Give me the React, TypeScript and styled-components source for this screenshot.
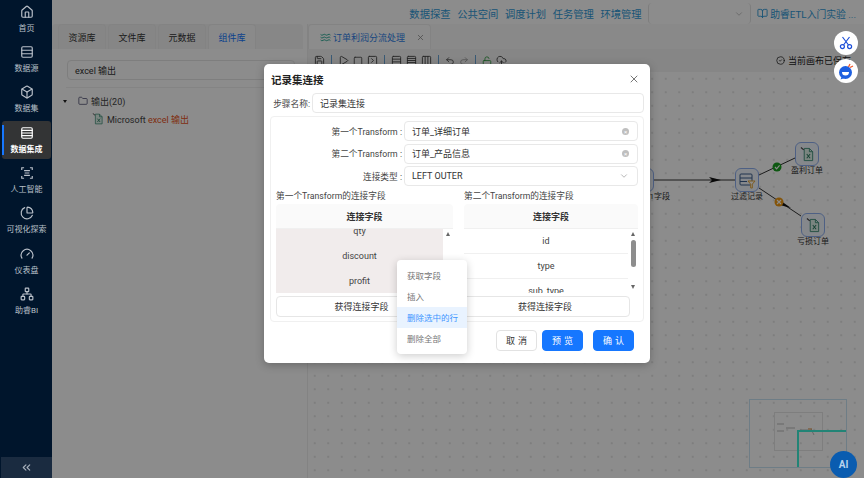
import styled, { createGlobalStyle } from "styled-components";
import {
  BookOpen,
  Box,
  ChartPie,
  ChevronDown,
  ChevronsLeft,
  CircleCheck,
  CloudUpload,
  Columns3,
  Folder,
  Gauge,
  House,
  LockOpen,
  Network,
  Play,
  Redo2,
  Rows3,
  Rows4,
  Save,
  Square,
  SquareChevronRight,
  Undo2,
  Waves,
  X,
} from "lucide-react";

const GlobalStyle = createGlobalStyle`
  html, body {
    margin: 0;
    padding: 0;
    width: 864px;
    height: 478px;
    overflow: hidden;
    background: #fff;
    font-family: Roboto, "Noto Sans CJK SC", sans-serif;
  }
  * { box-sizing: border-box; }
`;

const Page = styled.div`
  display: flex;
  width: 864px;
  height: 478px;
  position: relative;
  overflow: hidden;
`;

const Sidebar = styled.aside`
  width: 52px;
  flex: none;
  display: flex;
  flex-direction: column;
  background: #00152c;
  padding-left: 1px;
`;

const NavList = styled.nav`
  flex: 1;
  display: flex;
  flex-direction: column;
  gap: 2.4px;
  padding: 0 1px;
`;

const NavItem = styled.div<{ $active?: boolean }>`
  height: 38px;
  display: flex;
  flex-direction: column;
  align-items: center;
  justify-content: center;
  gap: 4px;
  border-radius: 3px;
  position: relative;
  font-size: 8px;
  line-height: 11px;
  white-space: nowrap;
  color: ${(p) => (p.$active ? "#ffffff" : "#b9c0c9")};
  background: ${(p) => (p.$active ? "#333435" : "transparent")};
  font-weight: ${(p) => (p.$active ? 600 : 400)};

  &::before {
    content: "";
    display: ${(p) => (p.$active ? "block" : "none")};
    position: absolute;
    left: 0;
    top: 4px;
    bottom: 4px;
    width: 2px;
    background: #1677ff;
  }
`;

const Collapse = styled.div`
  height: 21px;
  display: flex;
  align-items: center;
  justify-content: center;
  background: #1a2b40;
  color: #a9b2bd;
`;

const Main = styled.main`
  flex: 1;
  min-width: 0;
  position: relative;
  display: flex;
  flex-direction: column;
  background: #fff;
`;

const Header = styled.header`
  height: 24px;
  flex: none;
  display: flex;
  align-items: center;
  justify-content: flex-end;
  padding: 3px 8px 0 0;
  color: #2f9ad8;
  font-size: 10.3px;
`;

const HeaderLink = styled.span`
  margin-right: 6.6px;
  white-space: nowrap;
`;

const HeaderSelect = styled.div`
  width: 103px;
  height: 21px;
  margin: 0 6px 0 0;
  display: flex;
  align-items: center;
  justify-content: flex-end;
  padding-right: 6px;
  border-left: 1px solid #e4e4e4;
  border-right: 1px solid #e4e4e4;
  border-radius: 4px;
  color: #bbb;
`;

const Guide = styled.span`
  display: flex;
  align-items: center;
  gap: 2px;
  white-space: nowrap;
  font-size: 9.8px;
`;

const Body = styled.div`
  flex: 1;
  min-height: 0;
  display: flex;
`;

const LeftPanel = styled.section`
  width: 256px;
  flex: none;
  display: flex;
  flex-direction: column;
  border-right: 1px solid #eee;
`;

const TabBar = styled.div`
  height: 25px;
  flex: none;
  display: flex;
  gap: 2px;
  padding-left: 6px;
  margin-right: 4px;
  background: #f6f6f6;
  border-radius: 4px 4px 0 0;
`;

const Tab = styled.div<{ $active?: boolean }>`
  width: 48px;
  display: flex;
  align-items: center;
  justify-content: center;
  font-size: 9px;
  border: 1px solid #efefef;
  border-bottom: none;
  border-radius: 4px 4px 0 0;
  color: ${(p) => (p.$active ? "#1677ff" : "#333")};
  background: ${(p) => (p.$active ? "#fbfbfb" : "#f5f5f5")};
`;

const SearchRow = styled.div`
  display: flex;
  margin: 11px 0 0 15px;
  height: 20px;
  width: 228px;
  padding-left: 7px;
  align-items: center;
  font-size: 9px;
  color: #333;
  border: 1px solid #e6e6e6;
  border-radius: 4px;
`;

const Rule = styled.div`
  height: 1px;
  margin: 7px 2px 0 14px;
  background: #f0f0f0;
`;

const Tree = styled.div`
  padding: 4px 0 0 11px;
  font-size: 9px;
  color: #444;
`;

const TreeRow = styled.div<{ $indent: number }>`
  height: 18px;
  display: flex;
  align-items: center;
  gap: 3px;
  padding-left: ${(p) => p.$indent}px;
  white-space: nowrap;
`;

const Caret = styled.span`
  width: 0;
  height: 0;
  margin-right: 8px;
  border-left: 2.5px solid transparent;
  border-right: 2.5px solid transparent;
  border-top: 3.5px solid #222;
`;

const Highlight = styled.span`
  color: #e9541c;
`;

const Editor = styled.section`
  flex: 1;
  min-width: 0;
  display: flex;
  flex-direction: column;
`;

const EditorTabs = styled.div`
  height: 25px;
  flex: none;
  display: flex;
  background: #fafafa;
`;

const EditorTab = styled.div`
  width: 123px;
  display: flex;
  align-items: center;
  gap: 2px;
  padding-left: 11px;
  background: #fff;
  border: 1px solid #efefef;
  border-bottom: none;
  border-radius: 4px 4px 0 0;
  color: #2f7fe8;
  font-size: 9px;
  white-space: nowrap;
`;

const TabClose = styled.span`
  display: flex;
  margin-left: 9px;
  color: #888;
`;

const ToolBar = styled.div`
  height: 23px;
  flex: none;
  display: flex;
  align-items: center;
  gap: 4px;
  padding: 0 13px 0 6px;
  background: #f5f5f5;
  color: #444;
`;

const ToolSep = styled.span`
  width: 1px;
  height: 11px;
  margin: 0 2px;
  background: #6aa5d6;
`;

const SavedNote = styled.span`
  margin-left: auto;
  display: flex;
  align-items: center;
  gap: 3px;
  white-space: nowrap;
  font-size: 9px;
  color: #222;
`;

const Canvas = styled.div`
  flex: 1;
  position: relative;
  background-color: #fff;
  background-image: radial-gradient(#d4d4d4 0.6px, transparent 0.8px);
  background-size: 13.5px 13.5px;
`;

const Edges = styled.svg`
  position: absolute;
  left: 0;
  top: 0;
`;

const FlowNode = styled.div<{ $x: number; $y: number }>`
  position: absolute;
  left: ${(p) => p.$x}px;
  top: ${(p) => p.$y}px;
  width: 24px;
  height: 24px;
  display: flex;
  align-items: center;
  justify-content: center;
  border: 1px solid #8fb0f0;
  border-radius: 6px;
  background: #f3f7ff;
`;

const FlowLabel = styled.span`
  position: absolute;
  top: 22px;
  left: 50%;
  transform: translateX(-50%);
  font-size: 8px;
  line-height: 11px;
  color: #333;
  white-space: nowrap;
`;

const Mini = styled.div`
  position: absolute;
  left: 441px;
  top: 327px;
  width: 98px;
  height: 69px;
  border: 1px solid #c8e4f5;
`;

const MiniView = styled.div`
  position: absolute;
  left: 24px;
  top: 12px;
  width: 49px;
  height: 39px;
  border: 1px solid #e6e6e6;
`;

const MiniCross = styled.div`
  position: absolute;
  right: 0;
  bottom: 0;
  width: 49px;
  height: 37px;
  border-top: 2px solid #3ff0d8;
  border-left: 2px solid #3ff0d8;
`;

const Overlay = styled.div`
  position: absolute;
  inset: 0;
  display: flex;
  justify-content: center;
  align-items: flex-start;
  padding-top: 64px;
  background: rgba(0, 0, 0, 0.45);
`;

const Modal = styled.div`
  width: 386px;
  height: 299px;
  margin-right: 2px;
  padding: 5px 6px 0;
  background: #fff;
  border-radius: 5px;
  box-shadow: 0 2px 8px rgba(0, 0, 0, 0.25);
  display: flex;
  flex-direction: column;
  position: relative;
  color: #333;
  font-size: 9px;
`;

const ModalHead = styled.div`
  height: 20px;
  display: flex;
  align-items: center;
  justify-content: space-between;
  padding: 0 4px 0 1px;
  margin-bottom: 4px;
`;

const ModalTitle = styled.h2`
  margin: 0;
  font-size: 10.5px;
  font-weight: 700;
  color: #222;
`;

const CloseBtn = styled.span`
  display: flex;
  color: #777;
`;

const FormRow = styled.div<{ $labelWidth: number }>`
  display: grid;
  grid-template-columns: ${(p) => p.$labelWidth}px 1fr;
  align-items: center;
  column-gap: 2px;
  color: #444;
`;

const FormLabel = styled.label`
  text-align: right;
  white-space: nowrap;
  font-size: 8.7px;
`;

const Field = styled.div`
  height: 20px;
  display: flex;
  align-items: center;
  justify-content: space-between;
  padding: 0 8px 0 7px;
  border: 1px solid #e8e8e8;
  border-radius: 4px;
  background: #fff;
  color: #333;
  white-space: nowrap;
`;

const ClearDot = styled.span`
  width: 7px;
  height: 7px;
  border-radius: 50%;
  background: #bfbfbf;
  display: flex;
  align-items: center;
  justify-content: center;
  color: #fff;
  font-size: 6px;
  line-height: 7px;
`;

const FieldSet = styled.div`
  margin-top: 3px;
  height: 206px;
  padding: 4px 5px 0 5px;
  border: 1px solid #f0f0f0;
  border-radius: 4px;
  display: flex;
  flex-direction: column;
  gap: 2.7px;
`;

const Columns = styled.div`
  display: grid;
  grid-template-columns: 177px 174px;
  column-gap: 11px;
`;

const ColumnTitle = styled.div`
  height: 15px;
  line-height: 15px;
  font-size: 8.7px;
  color: #444;
  white-space: nowrap;
`;

const Table = styled.div`
  height: 89px;
  display: flex;
  flex-direction: column;
  overflow: hidden;
`;

const TableHead = styled.div`
  height: 25px;
  flex: none;
  display: flex;
  align-items: center;
  justify-content: center;
  font-weight: 700;
  color: #333;
  background: #fafafa;
  border-radius: 4px 4px 0 0;
  border-bottom: 1px solid #f0f0f0;
`;

const TableBody = styled.div`
  flex: 1;
  min-height: 0;
  display: flex;
  overflow: hidden;
`;

const Rows = styled.div<{ $shift: number }>`
  flex: 1;
  display: flex;
  flex-direction: column;
  margin-top: ${(p) => p.$shift}px;
`;

const Cell = styled.div<{ $selected?: boolean }>`
  height: 25px;
  flex: none;
  display: flex;
  align-items: center;
  justify-content: center;
  color: #444;
  font-size: 9px;
  background: ${(p) => (p.$selected ? "#f1ecec" : "#fff")};
  border-bottom: ${(p) => (p.$selected ? "none" : "1px solid #f0f0f0")};
`;

const ScrollTrack = styled.div`
  width: 10px;
  flex: none;
  position: relative;
  background: #fff;
`;

const ScrollArrow = styled.span<{ $down?: boolean }>`
  position: absolute;
  left: 2.5px;
  ${(p) => (p.$down ? "bottom: 4px;" : "top: 3px;")}
  border-left: 2.5px solid transparent;
  border-right: 2.5px solid transparent;
  ${(p) => (p.$down ? "border-top: 4px solid #666;" : "border-bottom: 4px solid #666;")}
`;

const ScrollThumb = styled.span`
  position: absolute;
  left: 3px;
  top: 11px;
  width: 5px;
  height: 27px;
  border-radius: 3px;
  background: #8d8d8d;
`;

const Actions = styled.div`
  display: grid;
  grid-template-columns: 171px 170px;
  column-gap: 13px;
`;

const FetchButton = styled.button`
  height: 21px;
  border: 1px solid #e6e6e6;
  border-radius: 4px;
  background: #fff;
  color: #333;
  font: inherit;
  padding: 0;
`;

const Footer = styled.div`
  display: flex;
  justify-content: flex-end;
  gap: 5px;
  padding: 8px 10px 0 0;
`;

const FootButton = styled.button<{ $primary?: boolean; $gap?: number }>`
  width: 41px;
  height: 21px;
  padding: 0;
  margin-left: ${(p) => p.$gap ?? 0}px;
  border: 1px solid ${(p) => (p.$primary ? "#1677ff" : "#e2e2e2")};
  border-radius: 4px;
  background: ${(p) => (p.$primary ? "#1677ff" : "#fff")};
  color: ${(p) => (p.$primary ? "#fff" : "#333")};
  font: inherit;
  letter-spacing: 3px;
  text-indent: 3px;
`;

const Menu = styled.div`
  position: absolute;
  left: 133px;
  top: 196px;
  width: 70px;
  height: 94px;
  padding: 5px 0;
  background: #fff;
  border-radius: 4px;
  box-shadow: 0 2px 8px rgba(0, 0, 0, 0.2);
  font-size: 8.5px;
`;

const MenuItem = styled.div<{ $active?: boolean }>`
  height: 21px;
  display: flex;
  align-items: center;
  padding: 0 0 2px 10px;
  color: ${(p) => (p.$active ? "#4096ff" : "#777")};
  background: ${(p) => (p.$active ? "#e9f3ff" : "transparent")};
`;

const FloatButton = styled.div<{ $top: number }>`
  position: absolute;
  left: 834px;
  top: ${(p) => p.$top}px;
  width: 24px;
  height: 24px;
  display: flex;
  align-items: center;
  justify-content: center;
  border-radius: 50%;
  background: #fff;
  color: #1d4fd8;
`;

const AiButton = styled.div`
  position: absolute;
  left: 830px;
  top: 451px;
  width: 27px;
  height: 27px;
  display: flex;
  align-items: center;
  justify-content: center;
  border-radius: 50%;
  background: #0a5cb0;
  color: #b9d3ee;
  font-size: 10px;
  font-weight: 700;
`;

function ScanIcon({ size = 14 }: { size?: number }) {
  return (
    <svg width={size} height={size} viewBox="0 0 24 24" fill="none" stroke="currentColor" strokeWidth="2">
      <path d="M3 7V3h4M17 3h4v4M21 17v4h-4M7 21H3v-4" />
      <path d="M7 8h10M8 12h8M7 16h10" />
    </svg>
  );
}

function SheetIcon({ size = 15 }: { size?: number }) {
  return (
    <svg width={size} height={size} viewBox="0 0 15 16" fill="none">
      <path d="M4 1.5h5.5L13 5v9.5H4z" fill="#dff2ea" stroke="#3f8f77" />
      <path d="M9.5 1.5V5H13" stroke="#3f8f77" />
      <path d="M6.7 7.5l3.6 4.5M10.3 7.5l-3.6 4.5" stroke="#2f7d63" strokeWidth="1.1" />
      <path d="M0.5 0.5l3 2.5" stroke="#444" strokeWidth="1.2" />
    </svg>
  );
}

function FilterIcon() {
  return (
    <svg width="17" height="17" viewBox="0 0 17 17" fill="none">
      <rect x="1" y="2" width="12" height="11" rx="1" stroke="#3b5e8c" />
      <path d="M1 6h12M1 9.5h7" stroke="#3b5e8c" />
      <path d="M9 9h7l-2.7 3.2V16h-1.6v-3.8z" fill="#fff" stroke="#e8a93a" />
    </svg>
  );
}

function CutIcon() {
  return (
    <svg width="14" height="14" viewBox="0 0 14 14" fill="none" stroke="#1d4fd8" strokeWidth="1.2">
      <circle cx="3.4" cy="10.6" r="2" />
      <circle cx="10.6" cy="10.6" r="2" />
      <path d="M4.5 9L10.5 1M9.5 9L3.5 1" />
    </svg>
  );
}

function BotIcon() {
  return (
    <svg width="18" height="18" viewBox="0 0 18 18">
      <circle cx="8.5" cy="10.5" r="6.5" fill="#1d5fe0" />
      <path d="M4.5 15l-1 2.5 4-1.5z" fill="#1d5fe0" />
      <path d="M5 10a3.5 3.5 0 0 0 7 0z" fill="#fff" />
      <path d="M13 2l-1.5 3M16 4l-3 1.5" stroke="#f0562a" strokeWidth="1.3" />
    </svg>
  );
}

function MiniMapDots() {
  return (
    <svg width="49" height="39" viewBox="0 0 49 39" fill="none">
      <path d="M2 11h7M2 18h7M11 15h9M25 17h8M36 16l3 6" stroke="#bbb" strokeWidth="1" />
      <path d="M33 16h4" stroke="#d9883a" strokeWidth="1" />
    </svg>
  );
}

const navItems: [string, typeof House | typeof ScanIcon, boolean?][] = [
  ["首页", House],
  ["数据源", Rows3],
  ["数据集", Box],
  ["数据集成", Rows4, true],
  ["人工智能", ScanIcon],
  ["可视化探索", ChartPie],
  ["仪表盘", Gauge],
  ["助睿BI", Network],
];

export default function App() {
  return (
    <Page>
      <GlobalStyle />
      <Sidebar>
        <NavList>
          {navItems.map(([label, Icon, active]) => (
            <NavItem key={label} $active={active}>
              <Icon size={14} />
              {label}
            </NavItem>
          ))}
        </NavList>
        <Collapse>
          <ChevronsLeft size={13} />
        </Collapse>
      </Sidebar>
      <Main>
        <Header>
          <HeaderLink>数据探查</HeaderLink>
          <HeaderLink>公共空间</HeaderLink>
          <HeaderLink>调度计划</HeaderLink>
          <HeaderLink>任务管理</HeaderLink>
          <HeaderLink>环境管理</HeaderLink>
          <HeaderSelect>
            <ChevronDown size={10} />
          </HeaderSelect>
          <Guide>
            <BookOpen size={11} />
            助睿ETL入门实验 ...
          </Guide>
        </Header>
        <Body>
          <LeftPanel>
            <TabBar>
              <Tab>资源库</Tab>
              <Tab>文件库</Tab>
              <Tab>元数据</Tab>
              <Tab $active>组件库</Tab>
            </TabBar>
            <SearchRow>excel 输出</SearchRow>
            <Rule />
            <Tree>
              <TreeRow $indent={0}>
                <Caret />
                <Folder size={10} color="#557" />
                输出(20)
              </TreeRow>
              <TreeRow $indent={29}>
                <SheetIcon size={12} />
                <span>
                  Microsoft <Highlight>excel 输出</Highlight>
                </span>
              </TreeRow>
            </Tree>
          </LeftPanel>
          <Editor>
            <EditorTabs>
              <EditorTab>
                <Waves size={11} color="#1aa38c" />
                订单利润分流处理
                <TabClose>
                  <X size={9} />
                </TabClose>
              </EditorTab>
            </EditorTabs>
            <ToolBar>
              <Save size={11} />
              <ToolSep />
              <Play size={11} />
              <Square size={10} />
              <SquareChevronRight size={11} />
              <ToolSep />
              <Rows3 size={11} />
              <Rows4 size={11} />
              <Columns3 size={11} />
              <ToolSep />
              <Undo2 size={10} />
              <Redo2 size={10} color="#999" />
              <ToolSep />
              <LockOpen size={10} color="#2c9a3d" />
              <CloudUpload size={11} />
              <SavedNote>
                <CircleCheck size={9} />
                当前画布已保存
              </SavedNote>
            </ToolBar>
            <Canvas>
              <Edges width="556" height="406" viewBox="0 0 556 406" fill="none">
                <path d="M346 108H427" stroke="#333" strokeWidth="1" />
                <path d="M401 105l12 3-12 3 3-3z" fill="#111" />
                <path d="M451 103L487 86" stroke="#333" />
                <path d="M451 116L493 144" stroke="#333" />
                <path d="M473 129l10 7-11-3z" fill="#111" />
                <circle cx="469" cy="95" r="4.5" fill="#19a01f" />
                <path d="M467 95l1.6 1.8 3-3.4" stroke="#fff" strokeWidth="1.2" />
                <circle cx="471" cy="130" r="4.5" fill="#f19a12" />
                <path d="M469 128l4 4M473 128l-4 4" stroke="#fff" strokeWidth="1.1" />
              </Edges>
              <FlowNode $x={322} $y={96}>
                <FlowLabel>字段选择_1字段</FlowLabel>
              </FlowNode>
              <FlowNode $x={427} $y={96}>
                <FilterIcon />
                <FlowLabel>过滤记录</FlowLabel>
              </FlowNode>
              <FlowNode $x={487} $y={70}>
                <SheetIcon />
                <FlowLabel>盈利订单</FlowLabel>
              </FlowNode>
              <FlowNode $x={493} $y={141}>
                <SheetIcon />
                <FlowLabel>亏损订单</FlowLabel>
              </FlowNode>
              <Mini>
                <MiniView>
                  <MiniMapDots />
                </MiniView>
                <MiniCross />
              </Mini>
            </Canvas>
          </Editor>
        </Body>
        <Overlay>
          <Modal>
            <ModalHead>
              <ModalTitle>记录集连接</ModalTitle>
              <CloseBtn>
                <X size={12} />
              </CloseBtn>
            </ModalHead>
            <FormRow $labelWidth={40}>
              <FormLabel>步骤名称:</FormLabel>
              <Field>记录集连接</Field>
            </FormRow>
            <FieldSet>
              <FormRow $labelWidth={126}>
                <FormLabel>第一个Transform :</FormLabel>
                <Field>
                  订单_详细订单
                  <ClearDot>×</ClearDot>
                </Field>
              </FormRow>
              <FormRow $labelWidth={126}>
                <FormLabel>第二个Transform :</FormLabel>
                <Field>
                  订单_产品信息
                  <ClearDot>×</ClearDot>
                </Field>
              </FormRow>
              <FormRow $labelWidth={126}>
                <FormLabel>连接类型 :</FormLabel>
                <Field>
                  LEFT OUTER
                  <ChevronDown size={10} color="#aaa" />
                </Field>
              </FormRow>
              <Columns>
                <div>
                  <ColumnTitle>第一个Transform的连接字段</ColumnTitle>
                  <Table>
                    <TableHead>连接字段</TableHead>
                    <TableBody>
                      <Rows $shift={-11}>
                        <Cell $selected>qty</Cell>
                        <Cell $selected>discount</Cell>
                        <Cell $selected>profit</Cell>
                      </Rows>
                      <ScrollTrack>
                        <ScrollArrow />
                      </ScrollTrack>
                    </TableBody>
                  </Table>
                </div>
                <div>
                  <ColumnTitle>第二个Transform的连接字段</ColumnTitle>
                  <Table>
                    <TableHead>连接字段</TableHead>
                    <TableBody>
                      <Rows $shift={0}>
                        <Cell>id</Cell>
                        <Cell>type</Cell>
                        <Cell>sub_type</Cell>
                      </Rows>
                      <ScrollTrack>
                        <ScrollArrow />
                        <ScrollThumb />
                        <ScrollArrow $down />
                      </ScrollTrack>
                    </TableBody>
                  </Table>
                </div>
              </Columns>
              <Actions>
                <FetchButton>获得连接字段</FetchButton>
                <FetchButton>获得连接字段</FetchButton>
              </Actions>
            </FieldSet>
            <Footer>
              <FootButton>取消</FootButton>
              <FootButton $primary>预览</FootButton>
              <FootButton $primary $gap={5}>
                确认
              </FootButton>
            </Footer>
            <Menu>
              <MenuItem>获取字段</MenuItem>
              <MenuItem>插入</MenuItem>
              <MenuItem $active>删除选中的行</MenuItem>
              <MenuItem>删除全部</MenuItem>
            </Menu>
          </Modal>
        </Overlay>
      </Main>
      <FloatButton $top={31}>
        <CutIcon />
      </FloatButton>
      <FloatButton $top={59}>
        <BotIcon />
      </FloatButton>
      <AiButton>AI</AiButton>
    </Page>
  );
}
